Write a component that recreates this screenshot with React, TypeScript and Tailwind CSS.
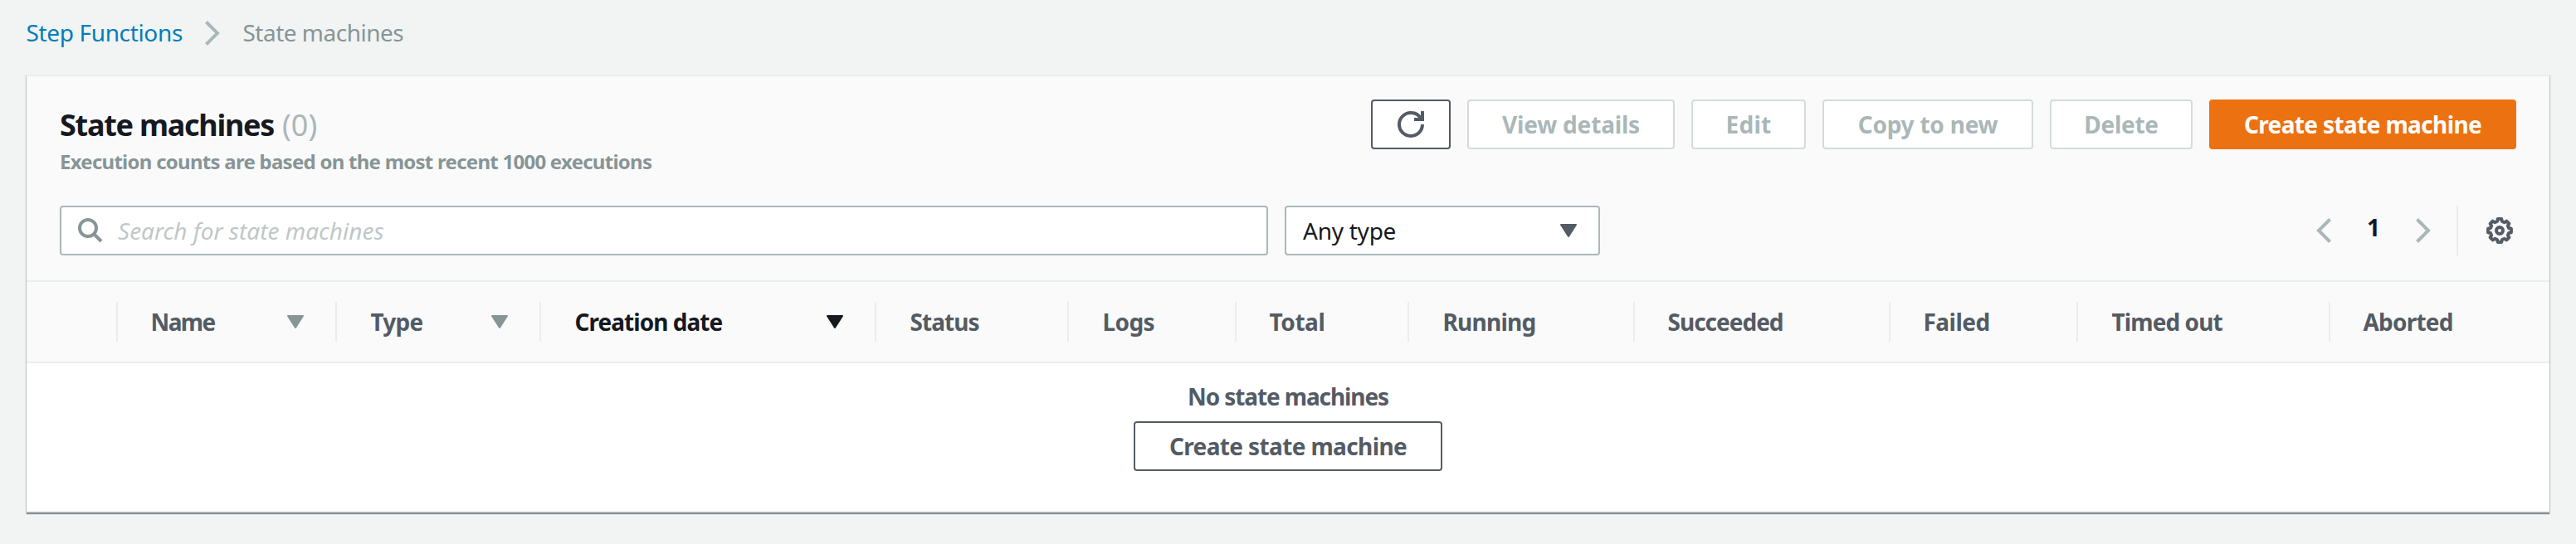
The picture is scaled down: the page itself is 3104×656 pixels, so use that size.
import type { ReactNode } from "react";

type Column = { label: string; width: string; tracking: string; sort?: "idle" | "active" };

const columns: Column[] = [
  { label: "Name", width: "w-[264px]", tracking: "tracking-[-1.6px]", sort: "idle" },
  { label: "Type", width: "w-[246px]", tracking: "ml-px tracking-[-0.76px]", sort: "idle" },
  { label: "Creation date", width: "w-[404px]", tracking: "ml-px tracking-[-0.96px]", sort: "active" },
  { label: "Status", width: "w-[232px]", tracking: "ml-px tracking-[-0.94px]" },
  { label: "Logs", width: "w-[202px]", tracking: "ml-px tracking-[-0.62px]" },
  { label: "Total", width: "w-[208px]", tracking: "tracking-[-0.41px]" },
  { label: "Running", width: "w-[272px]", tracking: "ml-px tracking-[-0.76px]" },
  { label: "Succeeded", width: "w-[308px]", tracking: "tracking-[-1px]" },
  { label: "Failed", width: "w-[226px]", tracking: "tracking-[-0.52px]" },
  { label: "Timed out", width: "w-[304px]", tracking: "ml-px tracking-[-0.9px]" },
  { label: "Aborted", width: "w-[266px]", tracking: "tracking-[-0.8px]" },
];

function Chevron({ flip = false }: { flip?: boolean }) {
  return (
    <svg width="18" height="30" viewBox="0 0 18 30" fill="none" stroke="#aab7b8" strokeWidth="4" className={flip ? "shrink-0 -scale-x-100" : "shrink-0"}>
      <path d="M1.5 1.5 15 15 1.5 28.5" />
    </svg>
  );
}

function Caret({ className }: { className: string }) {
  return (
    <svg width="20" height="16" viewBox="0 0 20 16" className={className} fill="currentColor" stroke="currentColor" strokeWidth="2" strokeLinejoin="round">
      <path d="M1 1h18L10 15z" />
    </svg>
  );
}

function Refresh() {
  return (
    <svg width="32" height="32" viewBox="0 0 16 16" fill="none" stroke="#545b64" strokeWidth="2">
      <path d="M10 5h5V0" />
      <path d="M15 8a6.957 6.957 0 0 1-7 7 6.957 6.957 0 0 1-7-7 6.957 6.957 0 0 1 7-7 6.87 6.87 0 0 1 6.3 4" />
    </svg>
  );
}

function gearOutline() {
  const points: string[] = [];
  for (let i = 0; i < 8; i++) {
    const steps: [number, number][] = [[-15, 5.7], [-9, 7.05], [9, 7.05], [15, 5.7]];
    for (const [offset, radius] of steps) {
      const a = ((i * 45 + offset) * Math.PI) / 180;
      points.push(`${(8 + radius * Math.cos(a)).toFixed(2)},${(8 + radius * Math.sin(a)).toFixed(2)}`);
    }
  }
  return points.join(" ");
}

function Gear() {
  return (
    <svg width="32" height="32" viewBox="0 0 16 16" fill="none" stroke="#545b64" strokeWidth="2" strokeLinejoin="round">
      <polygon points={gearOutline()} />
      <circle cx="8" cy="8" r="2" />
    </svg>
  );
}

function Button({ className, children }: { className: string; children: ReactNode }) {
  return (
    <button className={`flex h-[60px] shrink-0 items-center justify-center rounded border-2 font-bold whitespace-nowrap ${className}`}>
      {children}
    </button>
  );
}

export default function App() {
  return (
    <div className="h-[656px] w-[3104px] overflow-hidden bg-[#f2f3f3] font-['Noto_Sans',sans-serif] text-[28px] leading-9 text-[#16191f]">
      <nav className="flex h-[90px] items-center pb-3 pl-[31.5px] font-[450]">
        <a className="w-[215px] tracking-[-0.35px] text-[#007dbc]">Step Functions</a>
        <span className="mt-0.5"><Chevron /></span>
        <span className="ml-7 tracking-[-0.5px] text-[#879596]">State machines</span>
      </nav>

      <main className="mx-8 flex h-[528px] flex-col border-y-2 border-[#eaeded] bg-white shadow-[0_2px_1px_0_rgba(0,28,36,0.4),1px_1px_1px_0_rgba(0,28,36,0.15),-1px_1px_1px_0_rgba(0,28,36,0.15)]">
        <header className="flex h-[248px] shrink-0 flex-col border-b-2 border-[#eaeded] bg-[#fafafa] px-10">
          <div className="flex h-[156px] items-start justify-between pt-7">
            <div className="pt-[7px]">
              <h1 className="flex text-[36px] leading-12 font-bold">
                <span className="w-[268px] tracking-[-1.27px]">State machines</span>
                <span className="font-[450] text-[#aab7b8]">(0)</span>
              </h1>
              <p className="mt-[3px] text-2xl leading-[34px] font-bold tracking-[-0.74px] text-[#879596]">
                Execution counts are based on the most recent 1000 executions
              </p>
            </div>
            <div className="flex gap-5">
              <Button className="w-24 border-[#545b64] bg-white"><Refresh /></Button>
              <Button className="w-[250px] border-[#d5dbdb] bg-white tracking-[-0.18px] text-[#aab7b8]">View details</Button>
              <Button className="w-[138px] border-[#d5dbdb] bg-white tracking-[0.3px] text-[#aab7b8]">Edit</Button>
              <Button className="w-[254px] border-[#d5dbdb] bg-white tracking-[-0.22px] text-[#aab7b8]">Copy to new</Button>
              <Button className="w-[172px] border-[#d5dbdb] bg-white tracking-[-0.28px] text-[#aab7b8]">Delete</Button>
              <Button className="w-[370px] border-[#ec7211] bg-[#ec7211] tracking-[-0.63px] text-white">Create state machine</Button>
            </div>
          </div>
          <div className="flex h-[60px] items-center">
            <div className="flex h-[60px] w-[1456px] items-center rounded border-2 border-[#aab7b8] bg-white pl-5">
              <svg width="30" height="30" viewBox="0 0 30 30" fill="none" stroke="#879596" strokeWidth="4">
                <circle cx="12" cy="12" r="10" />
                <path d="m19 19 9 9" />
              </svg>
              <span className="ml-[18px] pb-px font-[450] text-[#bfc7c7] italic">Search for state machines</span>
            </div>
            <div className="ml-5 flex h-[60px] w-[380px] items-center justify-between rounded border-2 border-[#aab7b8] bg-white pr-[26px] pl-5">
              <span className="pb-px font-[450] tracking-[-0.25px]">Any type</span>
              <Caret className="text-[#545b64]" />
            </div>
            <div className="ml-auto flex h-[60px] items-center pr-1">
              <Chevron flip />
              <span className="w-[102px] pb-2 text-center font-bold">1</span>
              <Chevron />
              <span className="ml-[31px] h-[60px] w-0.5 bg-[#eaeded]" />
              <span className="ml-[34px]"><Gear /></span>
            </div>
          </div>
        </header>

        <div className="flex h-[98px] shrink-0 items-center border-b-2 border-[#eaeded] bg-[#fafafa] pl-[108px] text-[#545b64]">
          {columns.map((c) => (
            <div key={c.label} className={`flex h-12 shrink-0 items-center justify-between border-l-2 border-[#eaeded] pr-[38px] pl-[39.5px] font-bold whitespace-nowrap ${c.width}`}>
              <span className={`pb-px ${c.tracking} ${c.sort === "active" ? "text-[#16191f]" : ""}`}>{c.label}</span>
              {c.sort && <Caret className={c.sort === "active" ? "text-[#16191f]" : "text-[#879596]"} />}
            </div>
          ))}
        </div>

        <div className="flex flex-col items-center pt-[22px] font-bold text-[#545b64]">
          <p className="tracking-[-1.11px]">No state machines</p>
          <Button className="mt-3 w-[372px] border-[#545b64] bg-white tracking-[-0.63px]">Create state machine</Button>
        </div>
      </main>
    </div>
  );
}
